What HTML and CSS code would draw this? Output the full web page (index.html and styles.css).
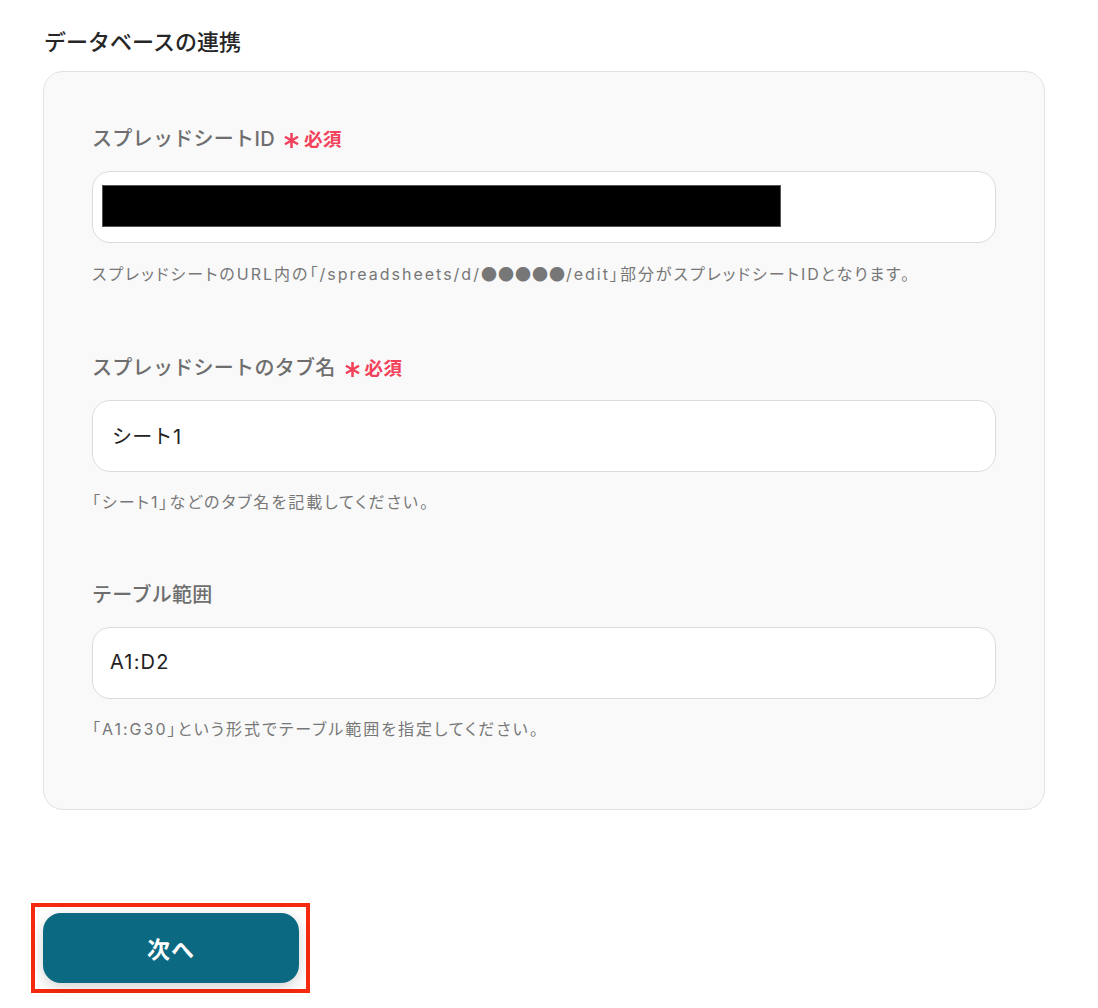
FILE: index.html
```html
<!DOCTYPE html>
<html lang="ja">
<head>
<meta charset="utf-8">
<link rel="stylesheet" href="styles.css">
</head>
<body>
<div class="page">
  <h2 class="section-title">データベースの連携</h2>
  <div class="card">
    <div class="field">
      <div class="label">スプレッドシートID<span class="req"><svg class="ast" viewBox="0 0 14 14" width="15" height="15"><g stroke="#f2415a" stroke-width="2.4" stroke-linecap="butt"><line x1="7" y1="0" x2="7" y2="14"/><line x1="0.9" y1="3.5" x2="13.1" y2="10.5"/><line x1="0.9" y1="10.5" x2="13.1" y2="3.5"/></g></svg>必須</span></div>
      <div class="input"><span class="redact"></span></div>
      <div class="help">スプレッドシートのURL内の「/spreadsheets/d/<span class="dots">●●●●●</span>/edit」部分がスプレッドシートIDとなります。</div>
    </div>
    <div class="field">
      <div class="label">スプレッドシートのタブ名<span class="req"><svg class="ast" viewBox="0 0 14 14" width="15" height="15"><g stroke="#f2415a" stroke-width="2.4" stroke-linecap="butt"><line x1="7" y1="0" x2="7" y2="14"/><line x1="0.9" y1="3.5" x2="13.1" y2="10.5"/><line x1="0.9" y1="10.5" x2="13.1" y2="3.5"/></g></svg>必須</span></div>
      <div class="input"><span class="value">シート1</span></div>
      <div class="help">「シート1」などのタブ名を記載してください。</div>
    </div>
    <div class="field">
      <div class="label">テーブル範囲</div>
      <div class="input"><span class="value wide">A1:D2</span></div>
      <div class="help">「A1:G30」という形式でテーブル範囲を指定してください。</div>
    </div>
  </div>
  <div class="actions">
    <div class="highlight">
      <button class="next">次へ</button>
    </div>
  </div>
</div>
</body>
</html>
```
FILE: styles.css
```css
* { box-sizing: border-box; }
html, body { margin: 0; padding: 0; background: #ffffff; }
body {
  font-family: "Inter", "Noto Sans CJK JP", sans-serif;
  color: #222;
}
.page {
  padding: 27px 0 0 43px;
  width: 1045px;
}
.section-title {
  margin: 0 0 14px 1px;
  font-size: 22px;
  line-height: 30px;
  font-weight: 500;
  color: #262626;
}
.card {
  background: #f9f9f9;
  border: 1px solid #e2e2e2;
  border-radius: 20px;
  padding: 51px 48px 70px 48px;
  display: flex;
  flex-direction: column;
  gap: 68px;
}
.field { display: flex; flex-direction: column; }
.label {
  font-size: 20px;
  line-height: 30px;
  font-weight: 500;
  color: #6e6e6e;
  display: flex;
  align-items: center;
  letter-spacing: 0.3px;
}
.req {
  display: inline-flex;
  align-items: center;
  margin-left: 9px;
  color: #f2415a;
  font-size: 18.5px;
  font-weight: 600;
  padding-top: 1px;
  letter-spacing: 0.5px;
}
.ast { margin-right: 5px; margin-top: 3px; }
.input {
  margin-top: 17px;
  height: 72px;
  background: #fff;
  border: 1px solid #dcdcdc;
  border-radius: 18px;
  display: flex;
  align-items: center;
  padding: 0 18px 0 9px;
}
.redact {
  display: block;
  width: 679px;
  height: 42px;
  background: #000;
  border: 1px solid #555;
  margin-top: -2px;
}
.value {
  padding-left: 10px;
  font-size: 20px;
  color: #222;
  letter-spacing: 0.3px;
  margin-top: -2px;
}
.value.wide { padding-left: 8px; letter-spacing: 1.2px; }
.help {
  margin-top: 20px;
  font-size: 16px;
  line-height: 20px;
  color: #777;
  letter-spacing: 2px;
  font-feature-settings: "palt";
}
.dots {
  font-family: "Noto Sans CJK JP", sans-serif;
  letter-spacing: 1px;
}
.actions {
  margin-top: 93px;
  margin-left: -12px;
}
.highlight {
  display: inline-block;
  border: 4px solid #f52a0e;
  padding: 6px 7px 6px 8px;
}
.next {
  display: block;
  width: 256px;
  height: 70px;
  border: none;
  border-radius: 18px;
  background: #0b6a82;
  color: #fff;
  font-family: "Inter", "Noto Sans CJK JP", sans-serif;
  font-size: 23px;
  font-weight: 700;
  letter-spacing: 1px;
  box-shadow: 0 4px 14px rgba(0,0,0,0.18);
  cursor: pointer;
}
```
